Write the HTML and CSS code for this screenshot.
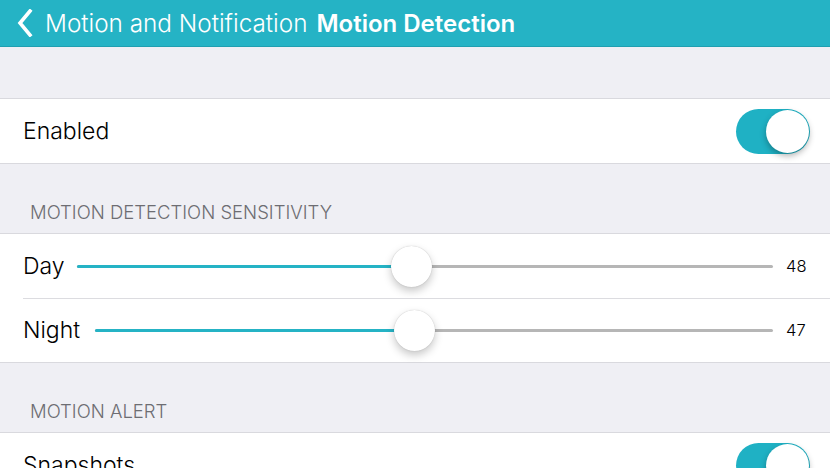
FILE: index.html
```html
<!DOCTYPE html>
<html lang="en">

<head>
  <meta charset="UTF-8">
  <meta name="viewport" content="width=device-width, initial-scale=1.0">
  <title>Motion Detection</title>
  <link rel="stylesheet" href="styles.css">
</head>

<body>
  <!-- 上方導覽列 -->
  <header class="nav">
    <a class="nav-back" href="#">
      <svg class="nav-chevron" width="16" height="28" viewBox="0 0 16 28">
        <path d="M13 2 L3 14 L13 26" fill="none" stroke="#fff" stroke-width="3.6" stroke-linecap="square" />
      </svg>
      <span>Motion and Notification</span>
    </a>
    <h1 class="nav-title">Motion Detection</h1>
  </header>

  <div class="spacer"></div>

  <ul class="group">
    <li class="row">
      <span class="label">Enabled</span>
      <span class="switch on"><span class="knob"></span></span>
    </li>
  </ul>

  <h2 class="section">MOTION DETECTION SENSITIVITY</h2>
  <ul class="group">
    <li class="row">
      <span class="label">Day</span>
      <div class="slider">
        <div class="track">
          <div class="fill" style="width: 48%"></div>
          <span class="thumb" style="left: 48%"></span>
        </div>
      </div>
      <span class="value">48</span>
    </li>
    <li class="row">
      <span class="label">Night</span>
      <div class="slider night">
        <div class="track">
          <div class="fill" style="width: 47%"></div>
          <span class="thumb" style="left: 47%"></span>
        </div>
      </div>
      <span class="value">47</span>
    </li>
  </ul>

  <h2 class="section">MOTION ALERT</h2>
  <ul class="group">
    <li class="row">
      <span class="label">Snapshots</span>
      <span class="switch on"><span class="knob"></span></span>
    </li>
  </ul>
</body>

</html>
```

FILE: styles.css
```css
* {
  box-sizing: border-box;
  font-family: Inter, 'Liberation Sans', sans-serif;
}

body {
  margin: 0;
  background: #efeff4;
  overflow: hidden;
}

/* 導覽列 */
.nav {
  height: 47px;
  background: #25b3c5;
  border-bottom: 1px solid #1f9fb0;
  display: flex;
  align-items: center;
  padding-left: 17px;
  color: #fff;
}

.nav-back {
  display: flex;
  align-items: center;
  color: #fff;
  text-decoration: none;
  font-size: 24.3px;
  font-weight: 300;
}

.nav-chevron {
  margin-right: 12px;
}

.nav-title {
  margin: 0 0 0 9px;
  font-size: 24px;
  font-weight: 600;
}

.spacer {
  height: 51px;
}

/* 清單群組 */
.group {
  list-style: none;
  margin: 0;
  padding: 0;
  background: #fff;
  border-top: 1px solid #d9d9de;
  border-bottom: 1px solid #d9d9de;
}

.row {
  height: 64px;
  display: flex;
  align-items: center;
  padding: 0 22px 0 23px;
  position: relative;
}

.row+.row::before {
  content: "";
  position: absolute;
  top: 0;
  left: 23px;
  right: 0;
  border-top: 1px solid #dcdce0;
}

.label {
  font-size: 23px;
  font-weight: 300;
  color: #000;
}

.section {
  margin: 0;
  padding: 37px 0 10px 30px;
  font-size: 18.5px;
  font-weight: 300;
  color: #6d6d72;
}

/* 開關 */
.switch {
  margin-left: auto;
  margin-right: -2px;
  width: 74px;
  height: 45px;
  border-radius: 23px;
  background: #1fb1c4;
  position: relative;
}

.switch .knob {
  position: absolute;
  top: 1px;
  right: 1px;
  width: 43px;
  height: 43px;
  border-radius: 50%;
  background: #fff;
  box-shadow: 0 3px 6px rgba(0, 0, 0, 0.3);
}

/* 滑桿 */
.slider {
  flex: 1;
  margin: 0 13px 0 12px;
}

.slider.night {
  margin-left: 15px;
}

.track {
  height: 3px;
  background: #b6b6b6;
  border-radius: 2px;
  position: relative;
}

.fill {
  height: 3px;
  background: #25b3c5;
  border-radius: 2px;
}

.thumb {
  position: absolute;
  top: 50%;
  width: 41px;
  height: 41px;
  margin: -20px 0 0 -20px;
  border-radius: 50%;
  background: #fff;
  box-shadow: 0 4px 8px rgba(0, 0, 0, 0.22), 0 0 1px rgba(0, 0, 0, 0.25);
}

.value {
  width: 22px;
  font-size: 16.5px;
  font-weight: 300;
  color: #000;
}
```
